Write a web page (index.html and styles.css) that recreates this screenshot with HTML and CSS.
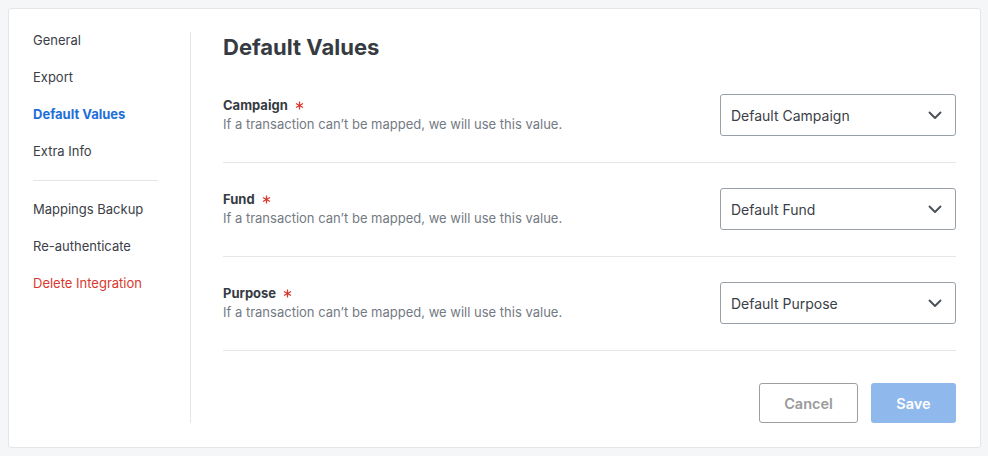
FILE: index.html
```html
<!DOCTYPE html>
<html>
<head>
<meta charset="utf-8">
<link rel="stylesheet" href="styles.css">
</head>
<body>
<div class="card">
  <nav class="sidebar">
    <a class="nav-item">General</a>
    <a class="nav-item">Export</a>
    <a class="nav-item active">Default Values</a>
    <a class="nav-item">Extra Info</a>
    <div class="nav-divider"></div>
    <a class="nav-item">Mappings Backup</a>
    <a class="nav-item">Re-authenticate</a>
    <a class="nav-item danger">Delete Integration</a>
  </nav>
  <main class="main">
    <h1 class="title">Default Values</h1>
    <div class="row">
      <div class="row-text">
        <div class="label">Campaign <svg class="req" viewBox="0 0 10 10"><path d="M5 0.5V9.5M1.1 2.75L8.9 7.25M1.1 7.25L8.9 2.75"/></svg></div>
        <div class="desc">If a transaction can’t be mapped, we will use this value.</div>
      </div>
      <div class="select"><span>Default Campaign</span><svg class="chev" viewBox="0 0 14 9"><path d="M1.5 1.5L7 7L12.5 1.5"/></svg></div>
    </div>
    <div class="row">
      <div class="row-text">
        <div class="label">Fund <svg class="req" viewBox="0 0 10 10"><path d="M5 0.5V9.5M1.1 2.75L8.9 7.25M1.1 7.25L8.9 2.75"/></svg></div>
        <div class="desc">If a transaction can’t be mapped, we will use this value.</div>
      </div>
      <div class="select"><span>Default Fund</span><svg class="chev" viewBox="0 0 14 9"><path d="M1.5 1.5L7 7L12.5 1.5"/></svg></div>
    </div>
    <div class="row">
      <div class="row-text">
        <div class="label">Purpose <svg class="req" viewBox="0 0 10 10"><path d="M5 0.5V9.5M1.1 2.75L8.9 7.25M1.1 7.25L8.9 2.75"/></svg></div>
        <div class="desc">If a transaction can’t be mapped, we will use this value.</div>
      </div>
      <div class="select"><span>Default Purpose</span><svg class="chev" viewBox="0 0 14 9"><path d="M1.5 1.5L7 7L12.5 1.5"/></svg></div>
    </div>
    <div class="actions">
      <button class="btn btn-cancel">Cancel</button>
      <button class="btn btn-save">Save</button>
    </div>
  </main>
</div>
</body>
</html>
```
FILE: styles.css
```css
* { box-sizing: border-box; }
html, body { margin: 0; padding: 0; }
body {
  background: #f5f6f8;
  padding: 8px;
  font-family: Inter, "Liberation Sans", sans-serif;
  color: #3b4047;
}
.card {
  width: 973px;
  height: 440px;
  background: #fff;
  border: 1px solid #e4e5e7;
  border-radius: 3px;
  display: flex;
  padding: 23px 24px 24px 0;
}
.sidebar {
  width: 182px;
  border-right: 1px solid #e4e5e7;
  padding: 0 32px 0 24px;
  display: flex;
  flex-direction: column;
}
.nav-item {
  font-size: 13px;
  line-height: 16px;
  margin-bottom: 21px;
  color: #3b4047;
  white-space: nowrap;
}
.nav-item.active { color: #1f6fd8; font-weight: 700; }
.nav-item.danger { color: #d8382e; }
.nav-divider {
  height: 1px;
  background: #e4e5e7;
  margin-bottom: 20px;
}
.main {
  flex: 1;
  padding-left: 32px;
  display: flex;
  flex-direction: column;
}
.title {
  margin: 0 0 7px;
  font-size: 22px;
  line-height: 30px;
  font-weight: 700;
  color: #363b42;
}
.row {
  display: flex;
  justify-content: space-between;
  align-items: center;
  padding: 25px 0 26px;
  border-bottom: 1px solid #e6e7e9;
}
.row-text { margin-top: -2px; }
.label {
  font-size: 13px;
  font-weight: 700;
  line-height: 18px;
  color: #363b42;
  display: flex;
  align-items: center;
}
.req {
  width: 9px;
  height: 9px;
  margin-left: 7px;
  margin-top: 2px;
  fill: none;
  stroke: #d8382e;
  stroke-width: 1.4;
}
.desc {
  font-size: 13px;
  line-height: 18px;
  margin-top: 1px;
  color: #737a83;
}
.select {
  width: 236px;
  height: 42px;
  border: 1px solid #9aa0a7;
  border-radius: 3px;
  display: flex;
  align-items: center;
  justify-content: space-between;
  padding: 0 13px 0 10px;
  font-size: 14px;
  color: #3b4047;
}
.chev {
  width: 14px;
  height: 9px;
  fill: none;
  stroke: #4a5058;
  stroke-width: 1.9;
  stroke-linecap: round;
  stroke-linejoin: round;
}
.actions {
  display: flex;
  justify-content: flex-end;
  gap: 13px;
  margin-top: 32px;
}
.btn {
  height: 40px;
  border-radius: 3px;
  font-family: inherit;
  font-size: 14.5px;
  font-weight: 600;
  cursor: pointer;
}
.btn-cancel {
  width: 99px;
  background: #fff;
  border: 1px solid #9e9e9e;
  color: #9b9b9b;
}
.btn-save {
  width: 85px;
  background: #8fb8ec;
  border: none;
  color: #fff;
}
```
